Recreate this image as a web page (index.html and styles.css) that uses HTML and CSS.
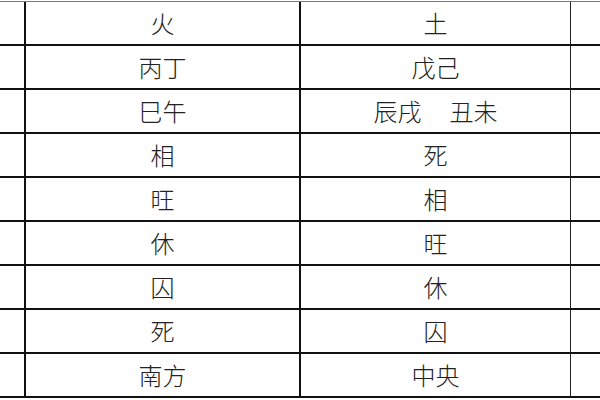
FILE: index.html
```html
<!DOCTYPE html>
<html lang="zh">
<head>
<meta charset="utf-8">
<link rel="stylesheet" href="styles.css">
</head>
<body>
<div class="sheet">
  <div class="row first"><div class="c c0"></div><div class="c c1">火</div><div class="c c2">土</div><div class="c c3"></div></div>
  <div class="row"><div class="c c0"></div><div class="c c1">丙丁</div><div class="c c2">戊己</div><div class="c c3"></div></div>
  <div class="row"><div class="c c0"></div><div class="c c1">巳午</div><div class="c c2">辰戌<span class="gap"></span>丑未</div><div class="c c3"></div></div>
  <div class="row"><div class="c c0"></div><div class="c c1">相</div><div class="c c2">死</div><div class="c c3"></div></div>
  <div class="row"><div class="c c0"></div><div class="c c1">旺</div><div class="c c2">相</div><div class="c c3"></div></div>
  <div class="row"><div class="c c0"></div><div class="c c1">休</div><div class="c c2">旺</div><div class="c c3"></div></div>
  <div class="row"><div class="c c0"></div><div class="c c1">囚</div><div class="c c2">休</div><div class="c c3"></div></div>
  <div class="row"><div class="c c0"></div><div class="c c1">死</div><div class="c c2">囚</div><div class="c c3"></div></div>
  <div class="row"><div class="c c0"></div><div class="c c1">南方</div><div class="c c2">中央</div><div class="c c3"></div></div>
</div>
</body>
</html>
```

FILE: styles.css
```css
html, body {
  margin: 0;
  padding: 0;
  background: #fff;
  overflow: hidden;
}
body {
  width: 600px;
  height: 400px;
  padding-top: 1px;
  box-sizing: border-box;
}
.sheet {
  display: flex;
  flex-direction: column;
  border-top: 1px solid #777;
  font-family: "Noto Sans CJK SC", "Noto Sans CJK JP", sans-serif;
  font-weight: 300;
  font-size: 24px;
  color: #222;
}
.row {
  display: grid;
  grid-template-columns: 26px 275px 270px 1fr;
  height: 44px;
  box-sizing: border-box;
  border-bottom: 2px solid #111;
}
.c {
  display: flex;
  align-items: center;
  justify-content: center;
  line-height: 1;
  white-space: nowrap;
}
.c0 { border-right: 2px solid #111; }
.c1 { border-right: 2px solid #111; }
.c2 { border-right: 1px solid #222; }
.gap {
  display: inline-block;
  width: 28px;
}
```
